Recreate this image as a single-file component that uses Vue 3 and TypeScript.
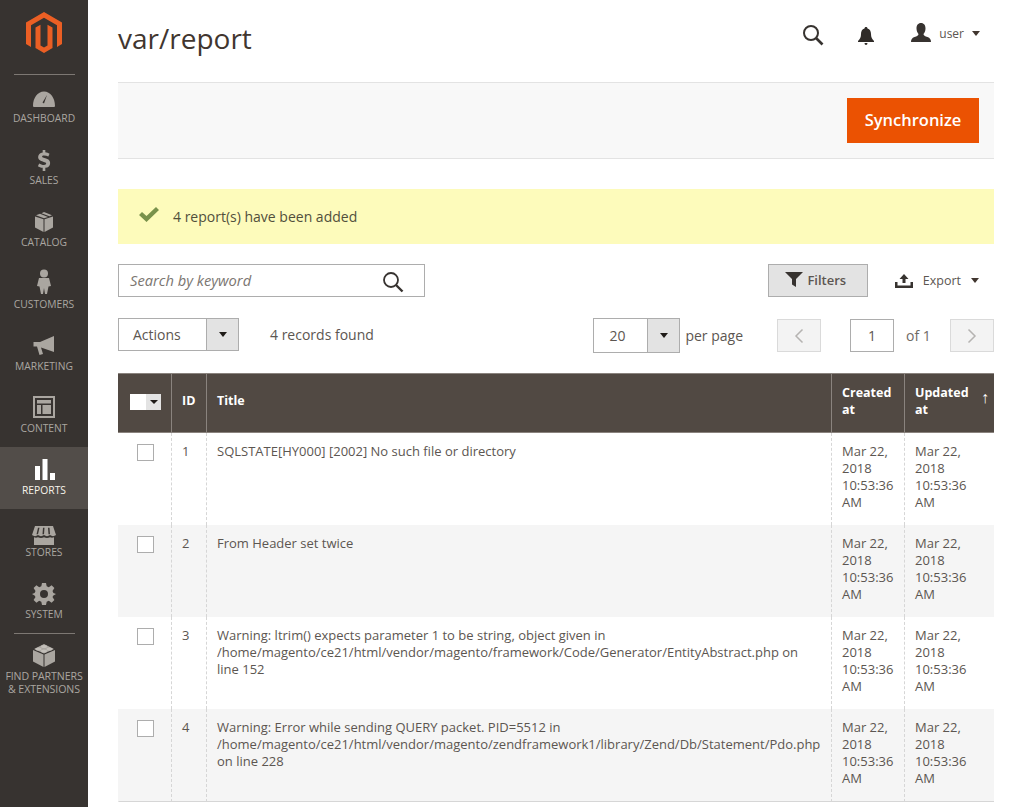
<script setup lang="ts">
interface NavItem { label: string; icon: string; active?: boolean }
const nav: NavItem[] = [
  { label: 'DASHBOARD', icon: 'dashboard' },
  { label: 'SALES', icon: 'sales' },
  { label: 'CATALOG', icon: 'catalog' },
  { label: 'CUSTOMERS', icon: 'customers' },
  { label: 'MARKETING', icon: 'marketing' },
  { label: 'CONTENT', icon: 'content' },
  { label: 'REPORTS', icon: 'reports', active: true },
  { label: 'STORES', icon: 'stores' },
  { label: 'SYSTEM', icon: 'system' }
]
const rows = [
  { id: 1, title: ['SQLSTATE[HY000] [2002] No such file or directory'] },
  { id: 2, title: ['From Header set twice'] },
  { id: 3, title: ['Warning: ltrim() expects parameter 1 to be string, object given in', '/home/magento/ce21/html/vendor/magento/framework/Code/Generator/EntityAbstract.php on', 'line 152'] },
  { id: 4, title: ['Warning: Error while sending QUERY packet. PID=5512 in', '/home/magento/ce21/html/vendor/magento/zendframework1/library/Zend/Db/Statement/Pdo.php', 'on line 228'] }
]
const dateLines = ['Mar 22,', '2018', '10:53:36', 'AM']
</script>

<template>
  <div class="page">
    <aside class="sidebar">
      <div class="logo">
        <svg width="38" height="42" viewBox="0 0 38 42">
          <path fill="#eb5f24" d="M19 0 37 10.5V32L32 35V13.300L19 5.800 6 13.300V35L1 32V10.500Z" />
          <path fill="#eb5f24" d="M10.500 15.500 15.500 12.800V33.500L19 35.600 22.500 33.500V12.800L27.500 15.500V36L19 41 10.500 36Z" />
        </svg>
      </div>
      <nav class="nav">
        <a v-for="item in nav" :key="item.label" class="nav-item" :class="{ active: item.active }">
          <span class="nav-icon">
            <svg v-if="item.icon === 'dashboard'" width="24" height="18" viewBox="0 0 24 18">
              <path fill="#aaa6a0" fill-rule="evenodd" d="M1 16C1 8 5.500 1.500 12 1.500S23 8 23 16Q23 17 22 17H2Q1 17 1 16ZM12 13.500 15 5 10.500 12.500Z" />
            </svg>
            <svg v-else-if="item.icon === 'sales'" class="drop-1" width="14" height="21" viewBox="0 0 16 24">
              <path fill="#aaa6a0" d="M6.500 0H9.500V2.700C11.300 2.900 13 3.500 14.300 4.300L13 7.500C11.500 6.700 9.800 6.200 8 6.200 6.500 6.200 5.800 6.800 5.800 7.500 5.800 8.400 7 8.900 9.300 9.500 12.500 10.400 15 11.600 15 15 15 18 12.900 19.900 9.500 20.300V24H6.500V20.400C4.300 20.200 2.300 19.500 1 18.500L2.500 15.300C3.900 16.300 6 17 8 17 9.600 17 10.500 16.400 10.500 15.500 10.500 14.600 9.500 14.100 7 13.400 3.800 12.500 1.300 11.300 1.300 8.100 1.300 5.300 3.300 3.300 6.500 2.800Z" />
            </svg>
            <svg v-else-if="item.icon === 'catalog'" width="20" height="21" viewBox="0 0 20 21">
              <path fill="#aaa6a0" d="M9.500 8.300V21L1 16.500V5.500ZM10.500 8.300 19 5.500V16.500L10.500 21ZM2 4.300 6 2.800 14 6 10 7.300ZM7.500 2.200 10 1 18 4.300 15.500 5.300Z" />
            </svg>
            <svg v-else-if="item.icon === 'customers'" width="16" height="25" viewBox="0 0 16 25">
              <circle cx="8" cy="4.500" r="4" fill="#aaa6a0" />
              <path fill="#aaa6a0" d="M3 9H13L15 17 12.500 17.500 11 25H9L8 19 7 25H5L3.500 17.500 1 17Z" />
            </svg>
            <svg v-else-if="item.icon === 'marketing'" width="24" height="20" viewBox="0 0 24 20">
              <path fill="#aaa6a0" d="M22 0V16L9 11.500 11 18 7.500 19 5 10.500H1.500V6H8Z" />
            </svg>
            <svg v-else-if="item.icon === 'content'" width="22" height="22" viewBox="0 0 22 22">
              <path fill="#aaa6a0" fill-rule="evenodd" d="M0 0H22V22H0ZM2 2V20H20V2ZM4 4H18V7.500H4ZM4 9H8V18H4ZM9.500 9H18V18H9.500Z" />
            </svg>
            <svg v-else-if="item.icon === 'reports'" class="nudge-right" width="20" height="21" viewBox="0 0 20 21">
              <path fill="#fff" d="M0 7H5V21H0ZM7.500 0H12.500V21H7.500ZM15 14H20V21H15Z" />
            </svg>
            <svg v-else-if="item.icon === 'stores'" class="drop-3" width="24" height="19" viewBox="0 0 24 21" preserveAspectRatio="none">
              <path fill="#aaa6a0" fill-rule="evenodd" d="M3 0H21L24 10Q21 12.500 18 10 15 12.500 12 10 9 12.500 6 10 3 12.500 0 10ZM6 2 4.500 9H6L7.500 2ZM11 2 10.500 9H12L12.500 2ZM16 2 16.500 9H18L17.500 2ZM2 12.500Q4 13.200 6 12.500 9 14 12 12.500 15 14 18 12.500 20 13.200 22 12.500V21H2Z" />
            </svg>
            <svg v-else-if="item.icon === 'system'" class="drop-2" width="24" height="24" viewBox="0 0 24 24">
              <path fill="#aaa6a0" fill-rule="evenodd" d="M10 1H14L14.700 4.300 16.800 5.200 19.600 3.300 22.400 6.100 20.500 8.900 21.400 11 24 12 21.400 13.500 20.500 15.100 22.400 17.900 19.600 20.700 16.800 18.800 14.700 19.700 14 23H10L9.300 19.700 7.200 18.800 4.400 20.700 1.600 17.900 3.500 15.100 2.600 13.500 0 12 2.600 11 3.500 8.900 1.600 6.100 4.400 3.300 7.200 5.200 9.300 4.300ZM12 8A4 4 0 1 0 12 16 4 4 0 1 0 12 8Z" />
            </svg>
          </span>
          <span class="nav-label">{{ item.label }}</span>
        </a>
        <a class="nav-item partners">
          <span class="nav-icon">
            <svg width="24" height="24" viewBox="0 0 24 24">
              <path fill="#aaa6a0" d="M11.500 11.500V24L1 18.500V7ZM12.500 11.500 23 7V18.500L12.500 24ZM12 1 22 6 12 10.500 2 6Z" />
              <ellipse cx="12" cy="3.500" rx="3" ry="1.500" fill="#c2beb8" />
              <ellipse cx="6.500" cy="6" rx="3" ry="1.500" fill="#c2beb8" />
              <ellipse cx="17.500" cy="6" rx="3" ry="1.500" fill="#c2beb8" />
              <ellipse cx="12" cy="8" rx="3" ry="1.500" fill="#c2beb8" />
            </svg>
          </span>
          <span class="nav-label">FIND PARTNERS<br />&amp; EXTENSIONS</span>
        </a>
      </nav>
    </aside>

    <main class="main">
      <header class="topbar">
        <h1 class="title">var/report</h1>
        <div class="actions">
          <svg class="search-icon" width="22" height="22" viewBox="0 0 22 22">
            <circle cx="9" cy="9" r="7" fill="none" stroke="#373330" stroke-width="2" />
            <path d="M14 14 20.500 20.500" stroke="#373330" stroke-width="2.600" />
          </svg>
          <svg class="bell" width="16" height="18" viewBox="0 0 16 18">
            <path fill="#2f2b28" d="M8 0C9 0 9.500.6 9.500 1.500 12 2.300 13 4.500 13 7 13 10.500 14 12 16 14V15H0V14C2 12 3 10.500 3 7 3 4.500 4 2.300 6.500 1.500 6.500.6 7 0 8 0ZM6.500 16H9.500Q9.500 18 8 18T6.500 16Z" />
          </svg>
          <div class="user">
            <svg width="20" height="20" viewBox="0 0 20 20">
              <path fill="#373330" d="M10 0C13 0 14.500 2.300 14.500 5.500 14.500 8 13.500 10 12.500 11 12.500 12.500 14 13.200 16.500 14 19 15 20 16.500 20 19H0C0 16.500 1 15 3.500 14 6 13.200 7.500 12.500 7.500 11 6.500 10 5.500 8 5.500 5.500 5.500 2.300 7 0 10 0Z" />
            </svg>
            <span>user</span>
            <i class="caret"></i>
          </div>
        </div>
      </header>

      <section class="page-actions">
        <button class="primary" type="button">Synchronize</button>
      </section>

      <section class="message">
        <svg width="20" height="15" viewBox="0 0 20 15">
          <path fill="#79924c" d="M0 8 3 5 7.500 9 17 0 20 3 7.500 15Z" />
        </svg>
        <span>4 report(s) have been added</span>
      </section>

      <section class="toolbar">
        <div class="search">
          <span class="placeholder">Search by keyword</span>
          <svg width="22" height="22" viewBox="0 0 22 22">
            <circle cx="9" cy="9" r="7" fill="none" stroke="#373330" stroke-width="1.800" />
            <path d="M14 14 20.500 20.500" stroke="#373330" stroke-width="2.400" />
          </svg>
        </div>
        <div class="toolbar-right">
          <button class="filters" type="button">
            <svg width="18" height="15" viewBox="0 0 18 15">
              <path fill="#373330" d="M0 0H18L11 7V15L7 12.500V7Z" />
            </svg>
            Filters
          </button>
          <div class="export">
            <svg width="18" height="14" viewBox="0 0 18 14">
              <path fill="#373330" d="M9 0 13.500 5H10.500V9H7.500V5H4.500ZM0 8H2.500V11.500H15.500V8H18V14H0Z" />
            </svg>
            <span>Export</span>
            <i class="caret"></i>
          </div>
        </div>
      </section>

      <section class="pager-row">
        <div class="left-tools">
          <div class="select actions-select">
            <span class="select-value">Actions</span>
            <span class="select-btn"><i class="caret dark"></i></span>
          </div>
          <span class="records">4 records found</span>
        </div>
        <div class="right-tools">
          <div class="select size-select">
            <span class="select-value center">20</span>
            <span class="select-btn"><i class="caret dark"></i></span>
          </div>
          <span class="per-page">per page</span>
          <span class="page-btn prev">
            <svg width="10" height="16" viewBox="0 0 10 16"><path d="M8.500 1.500 2 8l6.500 6.500" fill="none" stroke="#b5b3b1" stroke-width="1.500" /></svg>
          </span>
          <span class="page-input">1</span>
          <span class="of">of 1</span>
          <span class="page-btn">
            <svg width="10" height="16" viewBox="0 0 10 16"><path d="M1.500 1.500 8 8l-6.500 6.500" fill="none" stroke="#b5b3b1" stroke-width="1.500" /></svg>
          </span>
        </div>
      </section>

      <table class="grid">
        <colgroup>
          <col class="c-check" /><col class="c-id" /><col /><col class="c-created" /><col class="c-updated" />
        </colgroup>
        <thead>
          <tr>
            <th class="th-check">
              <span class="mass"><i class="mass-box"></i><i class="mass-btn"><i class="caret dark small"></i></i></span>
            </th>
            <th>ID</th>
            <th>Title</th>
            <th>Created<br />at</th>
            <th class="sorted">Updated<br />at<span class="arrow">↑</span></th>
          </tr>
        </thead>
        <tbody>
          <tr v-for="row in rows" :key="row.id">
            <td class="td-check"><span class="checkbox"></span></td>
            <td>{{ row.id }}</td>
            <td class="nowrap"><div v-for="line in row.title" :key="line">{{ line }}</div></td>
            <td><div v-for="line in dateLines" :key="line">{{ line }}</div></td>
            <td><div v-for="line in dateLines" :key="line">{{ line }}</div></td>
          </tr>
        </tbody>
      </table>
    </main>
  </div>
</template>

<style>
html, body { margin: 0; background: #fff; }
</style>

<style scoped>
* { box-sizing: border-box; }
.page {
  display: flex;
  width: 1014px;
  height: 807px;
  overflow: hidden;
  font-family: "Open Sans", "Liberation Sans", sans-serif;
  color: #41362f;
}
.sidebar {
  width: 88px;
  flex: none;
  background: #373330;
}
.logo {
  height: 75px;
  padding-top: 12px;
  display: flex;
  justify-content: center;
  align-items: flex-start;
  position: relative;
}
.logo::after {
  content: "";
  position: absolute;
  left: 14px;
  right: 13px;
  bottom: 0;
  height: 1px;
  background: #7d7873;
}
.nav { display: flex; flex-direction: column; }
.nav-item {
  height: 62px;
  display: flex;
  flex-direction: column;
  align-items: center;
  justify-content: flex-end;
  padding-bottom: 12px;
  color: #aaa6a0;
  font-size: 10.300px;
  line-height: 14px;
  text-align: center;
}
.nav-icon {
  height: 26px;
  margin-bottom: 3px;
  display: flex;
  align-items: flex-end;
  justify-content: center;
}
.drop-1 { margin-bottom: -1px; }
.drop-2 { margin-bottom: -2px; }
.drop-3 { margin-bottom: -3px; }
.nudge-right { margin-left: 1px; }
.nav-item.active { background: #524d49; color: #f7f3eb; }
.partners {
  height: 70px;
  padding-bottom: 7px;
  position: relative;
  line-height: 13px;
  white-space: nowrap;
  font-size: 10.600px;
  letter-spacing: -0.100px;
}
.partners .nav-icon { margin-bottom: 3px; }
.partners::before {
  content: "";
  position: absolute;
  top: 0;
  left: 14px;
  right: 13px;
  height: 1px;
  background: #7d7873;
}
.main {
  width: 926px;
  padding: 0 20px 0 30px;
  flex: none;
}
.topbar {
  height: 82px;
  display: flex;
  justify-content: space-between;
  align-items: flex-start;
}
.title {
  margin: 18px 0 0;
  font-size: 28px;
  line-height: 40px;
  font-weight: 400;
  color: #41362f;
}
.actions {
  display: flex;
  align-items: center;
  padding-top: 24px;
  height: 46px;
}
.search-icon { margin-right: 34px; }
.bell { margin-right: 37px; margin-top: 2px; }
.user {
  display: flex;
  align-items: center;
  gap: 8px;
  font-size: 12px;
  color: #5c5651;
  margin-right: 14px;
  position: relative;
  top: -2px;
}
.caret {
  display: inline-block;
  width: 0;
  height: 0;
  border-left: 4px solid transparent;
  border-right: 4px solid transparent;
  border-top: 5px solid #41362f;
}
.caret.small { border-top-width: 4px; }
.page-actions {
  height: 77px;
  background: #f8f8f8;
  border-top: 1px solid #e3e3e3;
  border-bottom: 1px solid #e3e3e3;
  padding: 15px;
  display: flex;
  justify-content: flex-end;
}
.primary {
  width: 132px;
  height: 45px;
  background: #eb5202;
  border: none;
  color: #fff;
  font-family: inherit;
  font-size: 16.500px;
  font-weight: 600;
  padding: 0 0 2px;
}
.message {
  margin-top: 30px;
  height: 55px;
  background: #fdfbbb;
  display: flex;
  align-items: center;
  padding-left: 21px;
  font-size: 14px;
  color: #514f3c;
}
.message svg { margin-right: 14px; margin-top: -5px; }
.toolbar {
  margin-top: 20px;
  height: 33px;
  display: flex;
  justify-content: space-between;
}
.search {
  width: 307px;
  height: 33px;
  border: 1px solid #adadad;
  display: flex;
  align-items: center;
  justify-content: space-between;
  padding: 0 20px 0 11px;
}
.placeholder { font-size: 14.700px; font-style: italic; color: #7b7671; margin-top: -2px; }
.search svg { margin-top: 2px; }
.toolbar-right { display: flex; align-items: center; }
.filters {
  width: 100px;
  height: 33px;
  background: #e3e3e3;
  border: 1px solid #adadad;
  font-family: inherit;
  font-size: 13px;
  font-weight: 600;
  color: #5c5651;
  display: flex;
  align-items: center;
  justify-content: center;
  gap: 4px;
  padding: 0 4px 2px 0;
}
.export {
  margin-left: 27px;
  margin-right: 15px;
  display: flex;
  align-items: center;
  font-size: 12.500px;
  color: #5c5651;
}
.export span { margin: 0 10px; }
.pager-row {
  margin-top: 21px;
  height: 33px;
  display: flex;
  justify-content: space-between;
  align-items: flex-start;
}
.left-tools, .right-tools { display: flex; align-items: center; }
.select {
  height: 33px;
  border: 1px solid #adadad;
  display: flex;
  font-size: 14px;
  color: #41362f;
}
.actions-select { width: 121px; }
.size-select { width: 87px; height: 35px; }
.select-value {
  flex: 1;
  display: flex;
  align-items: center;
  padding-left: 14px;
  color: #5c5651;
}
.select-value.center { padding-left: 15px; }
.select-btn {
  width: 32px;
  background: #e3e3e3;
  border-left: 1px solid #adadad;
  display: flex;
  align-items: center;
  justify-content: center;
}
.caret.dark { border-top-color: #1f1b18; }
.records { margin-left: 31px; font-size: 14px; color: #5c5651; }
.right-tools { height: 35px; }
.per-page { margin-left: 5px; margin-right: 34px; font-size: 14px; color: #5c5651; }
.page-btn {
  width: 44px;
  height: 33px;
  background: #f3f3f3;
  border: 1px solid #dadada;
  display: flex;
  align-items: center;
  justify-content: center;
}
.page-input {
  margin-left: 29px;
  width: 44px;
  height: 33px;
  border: 1px solid #adadad;
  display: flex;
  align-items: center;
  justify-content: center;
  font-size: 14px;
  color: #5c5651;
}
.of { margin-left: 12px; width: 44px; font-size: 14px; color: #6f6a65; }
.grid {
  margin-top: 22px;
  width: 100%;
  table-layout: fixed;
  border-collapse: separate;
  border-spacing: 0;
  font-size: 13px;
  line-height: 17px;
  color: #5c5651;
}
.c-check { width: 53px; }
.c-id { width: 35px; }
.c-created { width: 73px; }
.c-updated { width: 90px; }
th {
  height: 60px;
  background: #514943;
  color: #fff;
  font-weight: 700;
  font-size: 12.500px;
  text-align: left;
  padding: 8px 10px 13px;
  border-left: 1px solid #8a837e;
  border-top: 1px solid #8a837e;
  border-bottom: 1px solid #8a837e;
  position: relative;
  vertical-align: middle;
}
th:first-child { border-left: none; }
.th-check { padding: 0 0 3px 12px; }
.mass { display: flex; width: 31px; height: 16px; }
.mass-box { width: 16px; background: #fff; }
.mass-btn {
  width: 15px;
  background: #e3e3e3;
  display: flex;
  align-items: center;
  justify-content: center;
}
.arrow {
  position: absolute;
  right: 5px;
  top: 15px;
  font-weight: 400;
  font-size: 16px;
}
td {
  height: 92px;
  vertical-align: top;
  padding: 10px 10px 0;
  border-left: 1px dashed #d6d6d6;
}
td:first-child { border-left: 1px solid transparent; }
tbody tr:nth-child(even) td { background: #f5f5f5; }
tbody tr:last-child td { border-bottom: 1px solid #d6d6d6; height: 93px; }
.nowrap { white-space: nowrap; }
.td-check { padding: 11px 0 0 18px; }
.checkbox {
  display: block;
  width: 17px;
  height: 17px;
  background: #fff;
  border: 1px solid #adadad;
}
</style>
